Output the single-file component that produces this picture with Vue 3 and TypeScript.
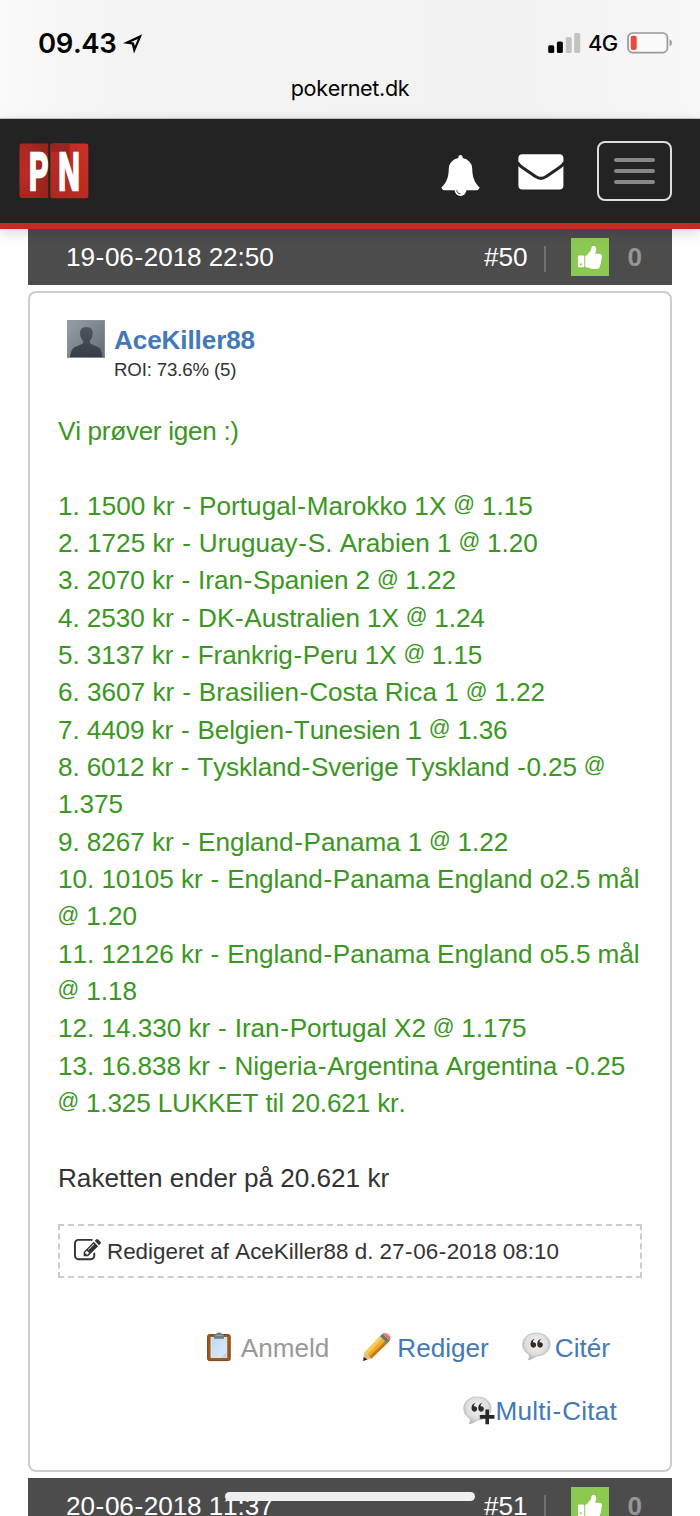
<script setup lang="ts">
import { h, type FunctionalComponent } from 'vue'

interface PostHead {
  date: string
  number: string
  likes: number
}

interface Line {
  text: string
  spacing: number
}

const current: PostHead = { date: '19-06-2018 22:50', number: '#50', likes: 0 }
const next: PostHead = { date: '20-06-2018 11:37', number: '#51', likes: 0 }

const lines: Line[] = [
  { text: 'Vi prøver igen :)', spacing: -0.3 },
  { text: '', spacing: 0 },
  { text: '1. 1500 kr - Portugal-Marokko 1X @ 1.15', spacing: 0.02 },
  { text: '2. 1725 kr - Uruguay-S. Arabien 1 @ 1.20', spacing: 0 },
  { text: '3. 2070 kr - Iran-Spanien 2 @ 1.22', spacing: -0.06 },
  { text: '4. 2530 kr - DK-Australien 1X @ 1.24', spacing: -0.06 },
  { text: '5. 3137 kr - Frankrig-Peru 1X @ 1.15', spacing: -0.09 },
  { text: '6. 3607 kr - Brasilien-Costa Rica 1 @ 1.22', spacing: 0 },
  { text: '7. 4409 kr - Belgien-Tunesien 1 @ 1.36', spacing: -0.11 },
  { text: '8. 6012 kr - Tyskland-Sverige Tyskland -0.25 @', spacing: -0.12 },
  { text: '1.375', spacing: -0.1 },
  { text: '9. 8267 kr - England-Panama 1 @ 1.22', spacing: -0.06 },
  { text: '10. 10105 kr - England-Panama England o2.5 mål', spacing: -0.05 },
  { text: '@ 1.20', spacing: 0 },
  { text: '11. 12126 kr - England-Panama England o5.5 mål', spacing: -0.05 },
  { text: '@ 1.18', spacing: 0 },
  { text: '12. 14.330 kr - Iran-Portugal X2 @ 1.175', spacing: -0.03 },
  { text: '13. 16.838 kr - Nigeria-Argentina Argentina -0.25', spacing: -0.04 },
  { text: '@ 1.325 LUKKET til 20.621 kr.', spacing: -0.15 },
]

// Sets wide hyphens and a compact at sign.
const Glyphs: FunctionalComponent<{ text: string }> = (props) =>
  h(
    'span',
    props.text.split(/([-@])/).filter(Boolean).map((part) => {
      if (part === '-') return h('span', { class: 'hy' }, part)
      if (part === '@') return h('span', { class: 'at' }, part)
      return part
    }),
  )
Glyphs.props = ['text']
</script>

<template>
  <div class="screen">
    <header class="browser">
      <div class="status">
        <span class="time">09.43</span>
        <svg class="arrow" width="20" height="20" viewBox="0 0 20 20">
          <path d="M19.2 .2 L11 19.5 L8.8 10.6 L0 9.3 Z M14.8 5.1 L8 8 L10.9 8.5 L11.9 11.9 Z" fill="#050505" fill-rule="evenodd" />
        </svg>
        <span class="spacer"></span>
        <svg class="signal" width="33" height="21" viewBox="0 0 33 21">
          <rect x="0.2" y="12.3" width="6" height="7.7" rx="1.6" fill="#050505" />
          <rect x="8.9" y="8.5" width="6" height="11.5" rx="1.6" fill="#050505" />
          <rect x="17.7" y="4" width="6" height="16" rx="1.6" fill="#c2c2c2" />
          <rect x="26.2" y="0" width="6" height="20" rx="1.6" fill="#c2c2c2" />
        </svg>
        <span class="net">4G</span>
        <svg class="battery" width="46" height="22" viewBox="0 0 46 22">
          <rect x="1" y="1" width="39.4" height="19.6" rx="4.6" fill="#fafafa" stroke="#989898" stroke-width="1.7" />
          <rect x="3.7" y="3.7" width="6" height="14.2" rx="2" fill="#eb4b3d" />
          <path d="M42.6 7.2 Q45 8.2 45 10.8 Q45 13.4 42.6 14.4 Z" fill="#989898" />
        </svg>
      </div>
      <div class="address">pokernet.dk</div>
    </header>

    <nav class="navbar">
      <svg class="logo" width="70" height="56" viewBox="0 0 70 56">
        <defs>
          <radialGradient id="leftRed" cx="0.15" cy="0.5" r="0.8">
            <stop offset="0" stop-color="#bd2b22" />
            <stop offset="1" stop-color="#97261f" />
          </radialGradient>
          <linearGradient id="rightRed" x1="0" y1="1" x2="1" y2="0">
            <stop offset="0" stop-color="#a82820" />
            <stop offset="1" stop-color="#cb3026" />
          </linearGradient>
        </defs>
        <path d="M3 .5 H29.2 V55 H3 Q.5 55 .5 52.5 V3 Q.5 .5 3 .5Z" fill="url(#leftRed)" />
        <rect x="31.3" y=".5" width="38" height="54.7" rx="2.5" fill="url(#rightRed)" />
        <path d="M33.8 .5 H50.5 V22 L41 9 H31.3 V3 Q31.3 .5 33.8 .5Z" fill="#98261f" />
        <text class="letter" transform="translate(9.9 46.5) scale(.54 1)">P</text>
        <text class="letter" transform="translate(39.3 46.5) scale(.56 1)">N</text>
      </svg>
      <span class="spacer"></span>
      <svg class="bell" width="41" height="41" viewBox="0 0 1792 1792">
        <path fill="#fff" d="M912 1696q0-16-16-16-59 0-101.5-42.5t-42.5-101.5q0-16-16-16t-16 16q0 73 51.5 124.5t124.5 51.5q16 0 16-16zm816-288q0 52-38 90t-90 38h-448q0 106-75 181t-181 75-181-75-75-181h-448q-52 0-90-38t-38-90q50-42 91-88t85-119.5 74.5-158.5 50-206 19.5-260q0-152 117-282.5t307-158.5q-8-19-8-39 0-40 28-68t68-28 68 28 28 68q0 20-8 39 190 28 307 158.5t117 282.5q0 139 19.5 260t50 206 74.5 158.5 85 119.5 91 88z" />
      </svg>
      <svg class="mail" width="46" height="36" viewBox="0 0 46 36">
        <rect x=".4" y=".3" width="45" height="35.3" rx="4" fill="#fff" />
        <path d="M-.5 8.6 Q1 11.3 4 13.3 L17.5 22.4 Q22.9 26.4 28.3 22.4 L41.8 13.3 Q44.8 11.3 46.3 8.6" fill="none" stroke="#232323" stroke-width="3" />
      </svg>
      <button class="toggle" type="button">
        <i></i><i></i><i></i>
      </button>
    </nav>

    <main class="thread">
      <div v-for="(head, i) in [current, next]" :key="head.number" class="post">
        <div class="post-head">
          <Glyphs class="date" :text="head.date" />
          <span class="spacer"></span>
          <span class="num">{{ head.number }}</span>
          <span class="divider"></span>
          <span class="like">
            <svg width="27" height="27" viewBox="0 0 1792 1792">
              <path fill="#fff" d="M320 1344q0-26-19-45t-45-19q-27 0-45.5 19t-18.5 45q0 27 18.5 45.5t45.5 18.5q26 0 45-18.5t19-45.5zm160-512v640q0 26-19 45t-45 19h-288q-26 0-45-19t-19-45v-640q0-26 19-45t45-19h288q26 0 45 19t19 45zm1184 0q0 86-55 149 15 44 15 76 3 76-43 137 17 56 0 117-15 57-54 94 9 112-49 181-64 76-197 78h-129q-66 0-144-15.5t-121.5-29-120.5-39.5q-123-43-158-44-26-1-45-19.5t-19-44.5v-641q0-25 18-43.5t43-20.5q24-2 76-59t101-121q68-87 101-120 18-18 31-48t17.5-48.5 13.5-60.5q7-39 12.5-61t19.5-52 34-50q19-19 45-19 46 0 82.5 10.5t60 26 40 40.5 24 45 12 50 5 45 .5 39q0 38-9.5 76t-19 60-27.5 56q-3 6-10 18t-11 22-8 24h277q78 0 135 57t57 135z" />
            </svg>
          </span>
          <span class="likes">{{ head.likes }}</span>
        </div>

        <article v-if="i === 0" class="card">
          <div class="author">
            <svg class="avatar" width="38" height="38" viewBox="0 0 38 38">
              <defs>
                <linearGradient id="avatarBg" x1="0" y1="0" x2="1" y2="1">
                  <stop offset="0" stop-color="#979fa7" />
                  <stop offset="1" stop-color="#626a74" />
                </linearGradient>
                <linearGradient id="avatarFg" x1="0" y1="0" x2="0" y2="1">
                  <stop offset="0" stop-color="#4d545c" />
                  <stop offset="1" stop-color="#373d47" />
                </linearGradient>
              </defs>
              <rect width="38" height="38" fill="url(#avatarBg)" />
              <path d="M3 37 Q4 29 7 27.5 L15 24 Q16.8 23 16.2 20.8 Q13 18 13 13 Q13 7 19.3 7 Q25.7 7 25.7 13 Q25.7 18 22.7 20.8 Q22.2 23 24 24 L32 27.5 Q34.5 29 35.2 37Z" fill="url(#avatarFg)" />
              <rect x=".5" y=".5" width="37" height="37" fill="none" stroke="#8d959d" stroke-opacity=".7" />
            </svg>
            <div class="who">
              <a class="name">AceKiller88</a>
              <span class="roi">ROI: 73.6% (5)</span>
            </div>
          </div>

          <div class="body">
            <div v-for="(line, n) in lines" :key="n" class="line" :style="{ letterSpacing: line.spacing + 'px' }">
              <Glyphs :text="line.text" />
            </div>
            <div class="line"></div>
            <div class="line plain">Raketten ender på 20.621 kr</div>
          </div>

          <div class="edited">
            <svg width="27" height="27" viewBox="0 0 1792 1792">
              <path fill="#333" d="M888 1184l116-116-152-152-116 116v56h96v96h56zm440-720q-16-16-33 1l-350 350q-17 17-1 33t33-1l350-350q17-17 1-33zm80 594v190q0 119-84.5 203.5t-203.5 84.5h-832q-119 0-203.5-84.5t-84.5-203.5v-832q0-119 84.5-203.5t203.5-84.5h832q63 0 117 25 15 7 18 23 3 17-9 29l-49 49q-14 14-32 8-23-6-45-6h-832q-66 0-113 47t-47 113v832q0 66 47 113t113 47h832q66 0 113-47t47-113v-126q0-13 9-22l64-64q15-15 35-7t20 29zm-96-738l288 288-672 672h-288v-288zm444 132l-92 92-288-288 92-92q28-28 68-28t68 28l152 152q28 28 28 68t-28 68z" />
            </svg>
            <Glyphs class="edited-text" text="Redigeret af AceKiller88 d. 27-06-2018 08:10" />
          </div>

          <div class="actions">
            <a class="action report">
              <svg width="24" height="30" viewBox="0 0 24 30">
                <defs>
                  <linearGradient id="paper" x1="0" y1="0" x2="1" y2="1">
                    <stop offset="0" stop-color="#bcd9f3" />
                    <stop offset="1" stop-color="#dbebfa" />
                  </linearGradient>
                </defs>
                <rect x=".6" y="2.6" width="22.6" height="26" rx="1.8" fill="#9a5a20" stroke="#81430f" />
                <rect x="4" y="5.5" width="15.8" height="20" fill="url(#paper)" stroke="#e9f0f4" stroke-width=".8" />
                <path d="M7 2.6 H9 Q9 .5 12 .5 Q15 .5 15 2.6 H17 V6.8 H7Z" fill="#6b7f84" />
                <path d="M8.5 3.6 H15.5" stroke="#93a5a9" />
                <path d="M19.6 20 V25.3 H14.5Z" fill="#bdd3e5" />
              </svg>
              <span>Anmeld</span>
            </a>
            <a class="action edit">
              <svg width="30" height="30" viewBox="0 0 30 30">
                <path d="M2 21 L18 4.2 L25.4 11.2 L9.5 26.4Z" fill="#edae2b" />
                <path d="M2 21 L18 4.2 L20.5 6.3 L4.6 23Z" fill="#f8ce58" />
                <path d="M7.2 24.8 L23.2 9 L25.4 11.2 L9.5 26.4Z" fill="#c87b14" />
                <path d="M2 21 L9.5 26.4 L1.3 28.7 Z" fill="#e1b995" />
                <path d="M1.8 25 L5.4 27.6 L1.1 29Z" fill="#292523" />
                <path d="M18 4.2 L20.5 1.8 L27.7 8.8 L25.4 11.2Z" fill="#547d7c" />
                <path d="M20.2 2 Q23 -.8 26.5 2.2 Q30 5.5 27.5 8.9Z" fill="#e87863" />
                <path d="M22.4 1.8 Q25 1 27 3.5" stroke="#f2b1a2" fill="none" />
              </svg>
              <span>Rediger</span>
            </a>
            <a class="action quote">
              <svg width="30" height="30" viewBox="0 0 30 30">
                <defs>
                  <radialGradient id="bubble" cx=".5" cy=".4" r=".6">
                    <stop offset="0" stop-color="#f4f4f4" />
                    <stop offset=".65" stop-color="#dedede" />
                    <stop offset="1" stop-color="#b5b5b5" />
                  </radialGradient>
                </defs>
                <path d="M14.3 1 C22 1 28 5.8 28 12.3 C28 18.8 22.5 23.8 14.6 24 C12 25.8 9.5 27.2 6.4 27.9 Q8 25.5 7.2 22.6 C3.2 20.5 .8 16.8 .8 12.3 C.8 5.8 6.8 1 14.3 1Z" fill="url(#bubble)" stroke="#b6b6b6" stroke-width=".8" />
                <path d="M13.5 6.8 Q10.8 7.5 10.9 10.2 Q14.2 10 14.2 13 Q13.9 15.8 11.4 15.7 Q8.4 15.3 8.5 11.8 Q8.7 7.3 13.5 6.8Z M20.2 6.8 Q17.5 7.5 17.6 10.2 Q20.9 10 20.9 13 Q20.6 15.8 18.1 15.7 Q15.1 15.3 15.2 11.8 Q15.4 7.3 20.2 6.8Z" fill="#322b27" />
              </svg>
              <span>Citér</span>
            </a>
          </div>
          <div class="actions multi">
            <a class="action">
              <svg width="33" height="30" viewBox="0 0 33 30">
                <path d="M14.3 1 C22 1 28 5.8 28 12.3 C28 18.8 22.5 23.8 14.6 24 C12 25.8 9.5 27.2 6.4 27.9 Q8 25.5 7.2 22.6 C3.2 20.5 .8 16.8 .8 12.3 C.8 5.8 6.8 1 14.3 1Z" fill="url(#bubble)" stroke="#b6b6b6" stroke-width=".8" />
                <path d="M13.5 6.8 Q10.8 7.5 10.9 10.2 Q14.2 10 14.2 13 Q13.9 15.8 11.4 15.7 Q8.4 15.3 8.5 11.8 Q8.7 7.3 13.5 6.8Z M20.2 6.8 Q17.5 7.5 17.6 10.2 Q20.9 10 20.9 13 Q20.6 15.8 18.1 15.7 Q15.1 15.3 15.2 11.8 Q15.4 7.3 20.2 6.8Z" fill="#322b27" />
                <path d="M24.2 13.6 V28.2 M16.8 20.9 H31.5" stroke="#2b2927" stroke-width="3.6" />
              </svg>
              <Glyphs class="multi-text" text="Multi-Citat" />
            </a>
          </div>
        </article>
      </div>
    </main>
    <div class="home-bar"></div>
  </div>
</template>

<style>
body {
  margin: 0;
  background: #fefefe;
}
</style>

<style scoped>
.screen {
  position: relative;
  width: 700px;
  height: 1516px;
  overflow: hidden;
  background: #fefefe;
  font-family: "Liberation Sans", Arial, sans-serif;
  font-size: 26.13px;
  font-kerning: none;
  color: #333;
  white-space: nowrap;
}
.screen *, .screen { box-sizing: border-box; }
.screen svg { display: block; flex: none; }
.spacer { flex: 1; }
.screen :deep(.hy) { padding: 0 0.028em; }
.screen :deep(.at) {
  font-size: 0.82em;
  line-height: 0;
  vertical-align: 3.6px;
  margin: 0 -0.4px;
}

.browser {
  height: 119px;
  padding-top: 27px;
  border-bottom: 1px solid #c6c6c6;
  background: linear-gradient(90deg, #fafafa 0, #f3f3f3 20%, #f2f2f2 75%, #f8f8f8 100%);
  color: #050505;
  font-family: Inter, sans-serif;
}
.status {
  display: flex;
  align-items: center;
  height: 32px;
  padding: 0 27px 0 38px;
}
.time { width: 79px; font-size: 27.5px; font-weight: 600; line-height: 32px; letter-spacing: -0.4px; }
.arrow { margin: 2px 0 0 5.5px; }
.signal { margin-right: 7px; }
.net { width: 30px; font-size: 22px; font-weight: 500; line-height: 32px; letter-spacing: -0.8px; }
.battery { margin-left: 9px; }
.address {
  margin-top: 15px;
  text-align: center;
  font-size: 21.6px;
  line-height: 28px;
  letter-spacing: -0.35px;
}

.navbar {
  position: relative;
  z-index: 1;
  display: flex;
  align-items: center;
  height: 110px;
  padding: 0 28px 0 18.5px;
  border-bottom: 6px solid #c52b20;
  background: #232323;
  box-shadow: 0 3px 12px rgba(0, 0, 0, 0.16);
}
.letter {
  font-family: "Liberation Sans", Arial, sans-serif;
  font-size: 53.5px;
  font-weight: 700;
  fill: #fff;
  stroke: #fff;
  stroke-width: 2.6px;
}
.bell { margin: 8px 37px 0 0; }
.mail { margin: 1px 33px 0 0; }
.toggle {
  display: flex;
  flex-direction: column;
  align-items: center;
  justify-content: center;
  gap: 7.5px;
  width: 75px;
  height: 60px;
  padding: 0;
  border: 2px solid #dcdcdc;
  border-radius: 8px;
  background: none;
}
.toggle i { width: 41px; height: 3.8px; border-radius: 2px; background: #888; }

.thread { padding: 0 28px; }
.post-head {
  display: flex;
  align-items: center;
  height: 56px;
  padding: 0 30px 0 38px;
  background: #4c4c4c;
  color: #fff;
}
.date { letter-spacing: -0.1px; }
.divider { width: 2px; height: 26px; margin: 3px 25px 0 17px; background: #707070; }
.like {
  display: flex;
  align-items: center;
  justify-content: center;
  width: 38px;
  height: 38px;
  background: #8bc951;
}
.likes { margin-left: 18px; font-weight: 700; color: #969696; }

.card {
  height: 1181px;
  margin: 6px 0;
  padding: 27px 28px 0;
  border: 2px solid #cdcdcd;
  border-radius: 8px;
  background: #fefefe;
}
.author { display: flex; padding-left: 9px; }
.who { display: flex; flex-direction: column; margin-left: 9px; }
.name { padding-top: 1px; font-weight: 700; line-height: 38px; color: #4479b8; letter-spacing: -0.12px; }
.roi { font-size: 18.67px; line-height: 22px; letter-spacing: -0.15px; }
.body { margin-top: 32px; color: #3a9722; }
.line { height: 37.33px; line-height: 37.33px; }
.plain { color: #333; }
.edited {
  display: flex;
  align-items: center;
  gap: 6px;
  height: 54px;
  margin-top: 27px;
  padding-left: 14px;
  border: 2px dashed #ccc;
  font-size: 22.4px;
}
.edited-text { padding-top: 2px; }
.actions { display: flex; justify-content: flex-end; height: 37px; margin-top: 51px; padding-right: 32px; }
.action { display: flex; align-items: center; color: #4479b8; }
.action > span { padding-top: 2px; }
.report { gap: 10px; color: #999; }
.edit { gap: 5px; margin-left: 33px; }
.quote { gap: 3px; margin-left: 33px; }
.multi { margin-top: 27px; padding-right: 25px; }
.multi .action > span { padding-top: 0; }
.multi-text { letter-spacing: 0.22px; }

.home-bar {
  position: absolute;
  left: 225px;
  top: 1492px;
  width: 250px;
  height: 9px;
  border-radius: 5px;
  background: #efefef;
}
</style>
